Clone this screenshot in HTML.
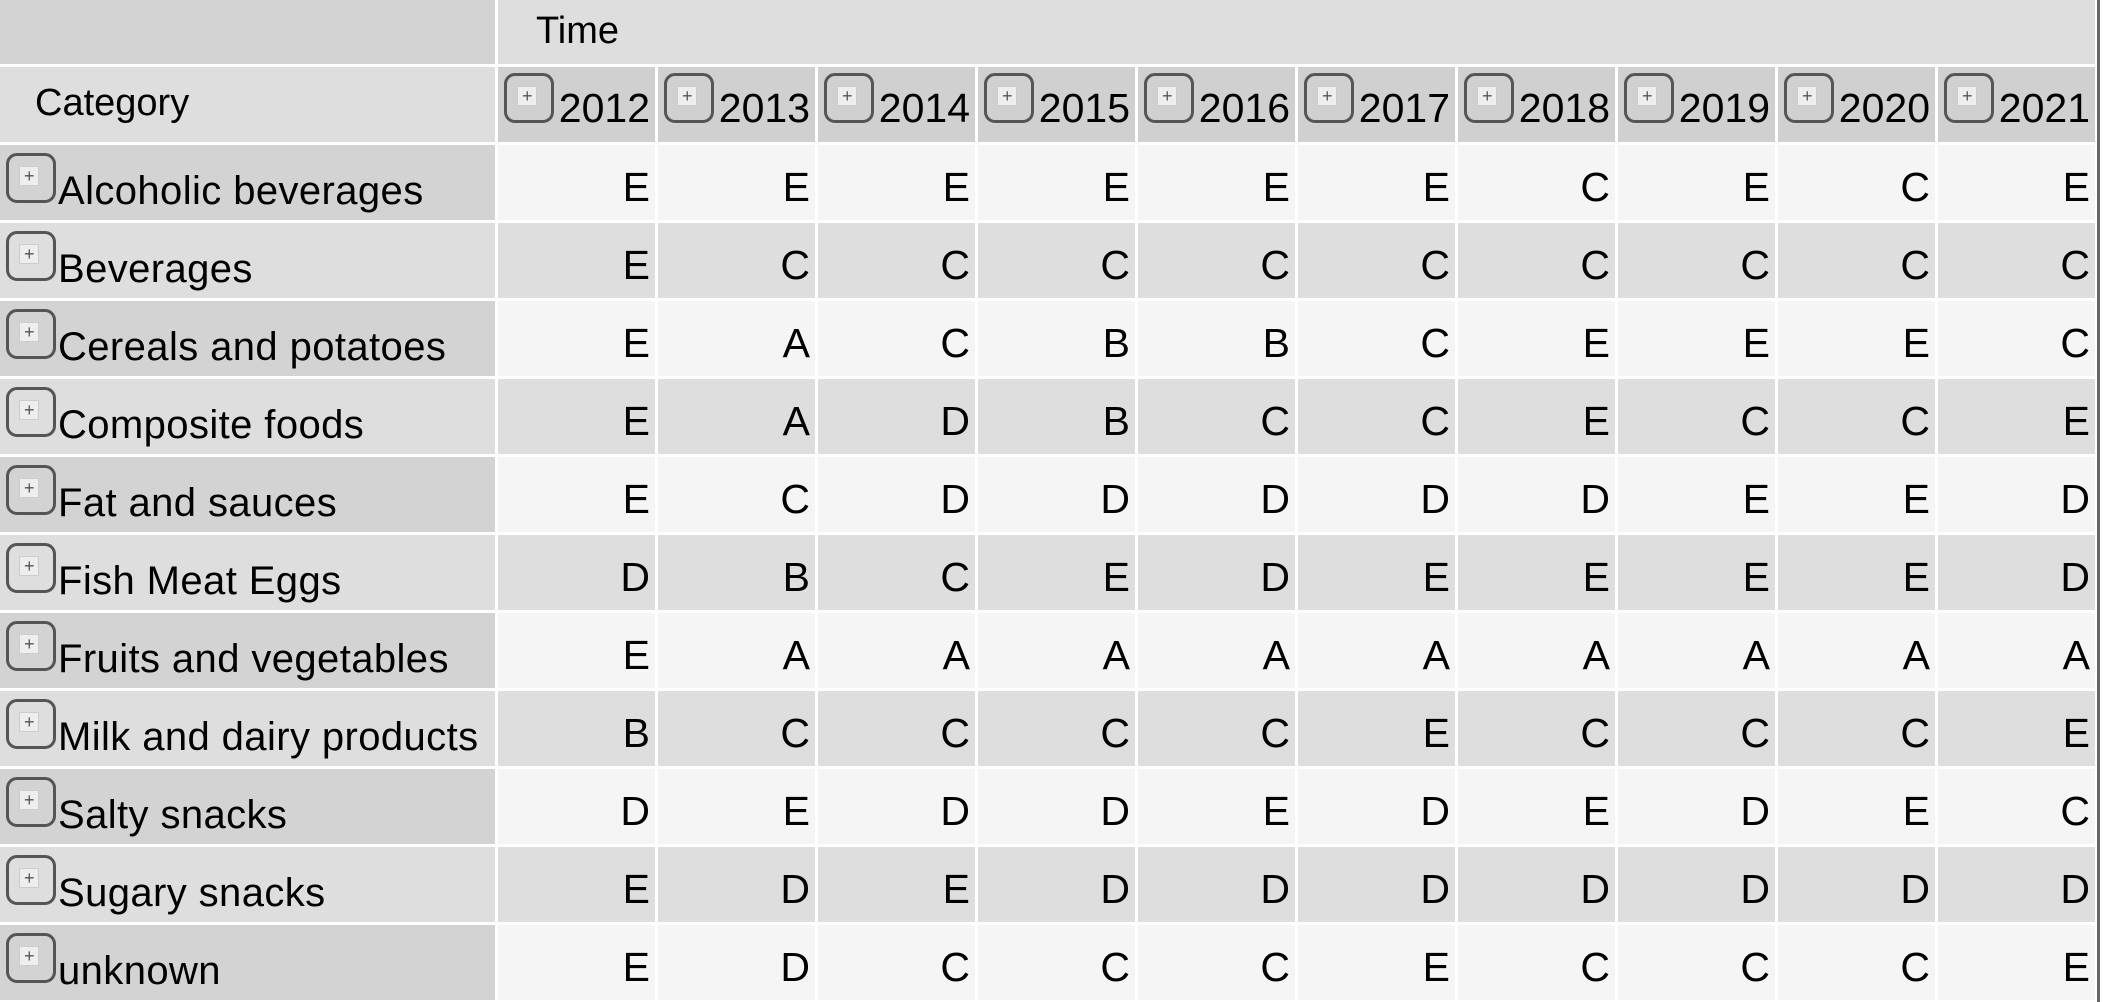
<!DOCTYPE html>
<html><head><meta charset="utf-8"><style>
html,body{margin:0;padding:0;background:#fff;width:2104px;height:1002px;overflow:hidden}
.g{position:absolute;left:0;top:0;display:grid;grid-template-columns:495px repeat(10,157px);grid-template-rows:64px 75px repeat(11,75px);gap:3px;font-family:"Liberation Sans","DejaVu Sans",sans-serif;font-size:40px;color:#000}
.g div{position:relative;overflow:hidden;white-space:nowrap}
.tl{background:#d3d3d3}
.time{background:#dedede;grid-column:2/12}
.time span{position:absolute;left:38px;top:10px;font-size:38px}
.cat{background:#dedede}
.cat span{position:absolute;left:35px;top:15px;font-size:38px}
.yh{background:#d0d0d0}
.yh span{position:absolute;right:5px;top:18px;font-size:41px}
.ic{position:absolute;width:44px;height:44px;border:3px solid #555;border-radius:11px;box-sizing:content-box}
.ic::after{content:"+";position:absolute;left:10px;top:10px;width:18px;height:18px;background:#eee;border:1px solid #ccc;font-size:18px;line-height:18px;text-align:center;color:#555}
.yh .ic{left:6px;top:6px}
.lab .ic{left:6px;top:8px}
.lab span{position:absolute;left:58px;top:24px;letter-spacing:0.4px}
.d{text-align:right}
.d span{position:absolute;right:5px;top:19px;font-size:41px}
.rbar{position:absolute;left:2097px;top:0;width:3px;height:1002px;background:#666}
</style></head><body>
<div class="g" id="g">
<div class="tl"></div><div class="time"><span>Time</span></div>
<div class="cat"><span>Category</span></div>
<div class="yh"><i class="ic"></i><span>2012</span></div>
<div class="yh"><i class="ic"></i><span>2013</span></div>
<div class="yh"><i class="ic"></i><span>2014</span></div>
<div class="yh"><i class="ic"></i><span>2015</span></div>
<div class="yh"><i class="ic"></i><span>2016</span></div>
<div class="yh"><i class="ic"></i><span>2017</span></div>
<div class="yh"><i class="ic"></i><span>2018</span></div>
<div class="yh"><i class="ic"></i><span>2019</span></div>
<div class="yh"><i class="ic"></i><span>2020</span></div>
<div class="yh"><i class="ic"></i><span>2021</span></div>

<div class="lab" style="background:#d3d3d3"><i class="ic"></i><span>Alcoholic beverages</span></div>
<div class="d" style="background:#f5f5f5"><span>E</span></div><div class="d" style="background:#f5f5f5"><span>E</span></div><div class="d" style="background:#f5f5f5"><span>E</span></div><div class="d" style="background:#f5f5f5"><span>E</span></div><div class="d" style="background:#f5f5f5"><span>E</span></div><div class="d" style="background:#f5f5f5"><span>E</span></div><div class="d" style="background:#f5f5f5"><span>C</span></div><div class="d" style="background:#f5f5f5"><span>E</span></div><div class="d" style="background:#f5f5f5"><span>C</span></div><div class="d" style="background:#f5f5f5"><span>E</span></div>

<div class="lab" style="background:#dedede"><i class="ic"></i><span>Beverages</span></div>
<div class="d" style="background:#dedede"><span>E</span></div><div class="d" style="background:#dedede"><span>C</span></div><div class="d" style="background:#dedede"><span>C</span></div><div class="d" style="background:#dedede"><span>C</span></div><div class="d" style="background:#dedede"><span>C</span></div><div class="d" style="background:#dedede"><span>C</span></div><div class="d" style="background:#dedede"><span>C</span></div><div class="d" style="background:#dedede"><span>C</span></div><div class="d" style="background:#dedede"><span>C</span></div><div class="d" style="background:#dedede"><span>C</span></div>

<div class="lab" style="background:#d3d3d3"><i class="ic"></i><span>Cereals and potatoes</span></div>
<div class="d" style="background:#f5f5f5"><span>E</span></div><div class="d" style="background:#f5f5f5"><span>A</span></div><div class="d" style="background:#f5f5f5"><span>C</span></div><div class="d" style="background:#f5f5f5"><span>B</span></div><div class="d" style="background:#f5f5f5"><span>B</span></div><div class="d" style="background:#f5f5f5"><span>C</span></div><div class="d" style="background:#f5f5f5"><span>E</span></div><div class="d" style="background:#f5f5f5"><span>E</span></div><div class="d" style="background:#f5f5f5"><span>E</span></div><div class="d" style="background:#f5f5f5"><span>C</span></div>

<div class="lab" style="background:#dedede"><i class="ic"></i><span>Composite foods</span></div>
<div class="d" style="background:#dedede"><span>E</span></div><div class="d" style="background:#dedede"><span>A</span></div><div class="d" style="background:#dedede"><span>D</span></div><div class="d" style="background:#dedede"><span>B</span></div><div class="d" style="background:#dedede"><span>C</span></div><div class="d" style="background:#dedede"><span>C</span></div><div class="d" style="background:#dedede"><span>E</span></div><div class="d" style="background:#dedede"><span>C</span></div><div class="d" style="background:#dedede"><span>C</span></div><div class="d" style="background:#dedede"><span>E</span></div>

<div class="lab" style="background:#d3d3d3"><i class="ic"></i><span>Fat and sauces</span></div>
<div class="d" style="background:#f5f5f5"><span>E</span></div><div class="d" style="background:#f5f5f5"><span>C</span></div><div class="d" style="background:#f5f5f5"><span>D</span></div><div class="d" style="background:#f5f5f5"><span>D</span></div><div class="d" style="background:#f5f5f5"><span>D</span></div><div class="d" style="background:#f5f5f5"><span>D</span></div><div class="d" style="background:#f5f5f5"><span>D</span></div><div class="d" style="background:#f5f5f5"><span>E</span></div><div class="d" style="background:#f5f5f5"><span>E</span></div><div class="d" style="background:#f5f5f5"><span>D</span></div>

<div class="lab" style="background:#dedede"><i class="ic"></i><span>Fish Meat Eggs</span></div>
<div class="d" style="background:#dedede"><span>D</span></div><div class="d" style="background:#dedede"><span>B</span></div><div class="d" style="background:#dedede"><span>C</span></div><div class="d" style="background:#dedede"><span>E</span></div><div class="d" style="background:#dedede"><span>D</span></div><div class="d" style="background:#dedede"><span>E</span></div><div class="d" style="background:#dedede"><span>E</span></div><div class="d" style="background:#dedede"><span>E</span></div><div class="d" style="background:#dedede"><span>E</span></div><div class="d" style="background:#dedede"><span>D</span></div>

<div class="lab" style="background:#d3d3d3"><i class="ic"></i><span>Fruits and vegetables</span></div>
<div class="d" style="background:#f5f5f5"><span>E</span></div><div class="d" style="background:#f5f5f5"><span>A</span></div><div class="d" style="background:#f5f5f5"><span>A</span></div><div class="d" style="background:#f5f5f5"><span>A</span></div><div class="d" style="background:#f5f5f5"><span>A</span></div><div class="d" style="background:#f5f5f5"><span>A</span></div><div class="d" style="background:#f5f5f5"><span>A</span></div><div class="d" style="background:#f5f5f5"><span>A</span></div><div class="d" style="background:#f5f5f5"><span>A</span></div><div class="d" style="background:#f5f5f5"><span>A</span></div>

<div class="lab" style="background:#dedede"><i class="ic"></i><span>Milk and dairy products</span></div>
<div class="d" style="background:#dedede"><span>B</span></div><div class="d" style="background:#dedede"><span>C</span></div><div class="d" style="background:#dedede"><span>C</span></div><div class="d" style="background:#dedede"><span>C</span></div><div class="d" style="background:#dedede"><span>C</span></div><div class="d" style="background:#dedede"><span>E</span></div><div class="d" style="background:#dedede"><span>C</span></div><div class="d" style="background:#dedede"><span>C</span></div><div class="d" style="background:#dedede"><span>C</span></div><div class="d" style="background:#dedede"><span>E</span></div>

<div class="lab" style="background:#d3d3d3"><i class="ic"></i><span>Salty snacks</span></div>
<div class="d" style="background:#f5f5f5"><span>D</span></div><div class="d" style="background:#f5f5f5"><span>E</span></div><div class="d" style="background:#f5f5f5"><span>D</span></div><div class="d" style="background:#f5f5f5"><span>D</span></div><div class="d" style="background:#f5f5f5"><span>E</span></div><div class="d" style="background:#f5f5f5"><span>D</span></div><div class="d" style="background:#f5f5f5"><span>E</span></div><div class="d" style="background:#f5f5f5"><span>D</span></div><div class="d" style="background:#f5f5f5"><span>E</span></div><div class="d" style="background:#f5f5f5"><span>C</span></div>

<div class="lab" style="background:#dedede"><i class="ic"></i><span>Sugary snacks</span></div>
<div class="d" style="background:#dedede"><span>E</span></div><div class="d" style="background:#dedede"><span>D</span></div><div class="d" style="background:#dedede"><span>E</span></div><div class="d" style="background:#dedede"><span>D</span></div><div class="d" style="background:#dedede"><span>D</span></div><div class="d" style="background:#dedede"><span>D</span></div><div class="d" style="background:#dedede"><span>D</span></div><div class="d" style="background:#dedede"><span>D</span></div><div class="d" style="background:#dedede"><span>D</span></div><div class="d" style="background:#dedede"><span>D</span></div>

<div class="lab" style="background:#d3d3d3"><i class="ic"></i><span>unknown</span></div>
<div class="d" style="background:#f5f5f5"><span>E</span></div><div class="d" style="background:#f5f5f5"><span>D</span></div><div class="d" style="background:#f5f5f5"><span>C</span></div><div class="d" style="background:#f5f5f5"><span>C</span></div><div class="d" style="background:#f5f5f5"><span>C</span></div><div class="d" style="background:#f5f5f5"><span>E</span></div><div class="d" style="background:#f5f5f5"><span>C</span></div><div class="d" style="background:#f5f5f5"><span>C</span></div><div class="d" style="background:#f5f5f5"><span>C</span></div><div class="d" style="background:#f5f5f5"><span>E</span></div>
</div>
<div class="rbar"></div>
</body></html>
